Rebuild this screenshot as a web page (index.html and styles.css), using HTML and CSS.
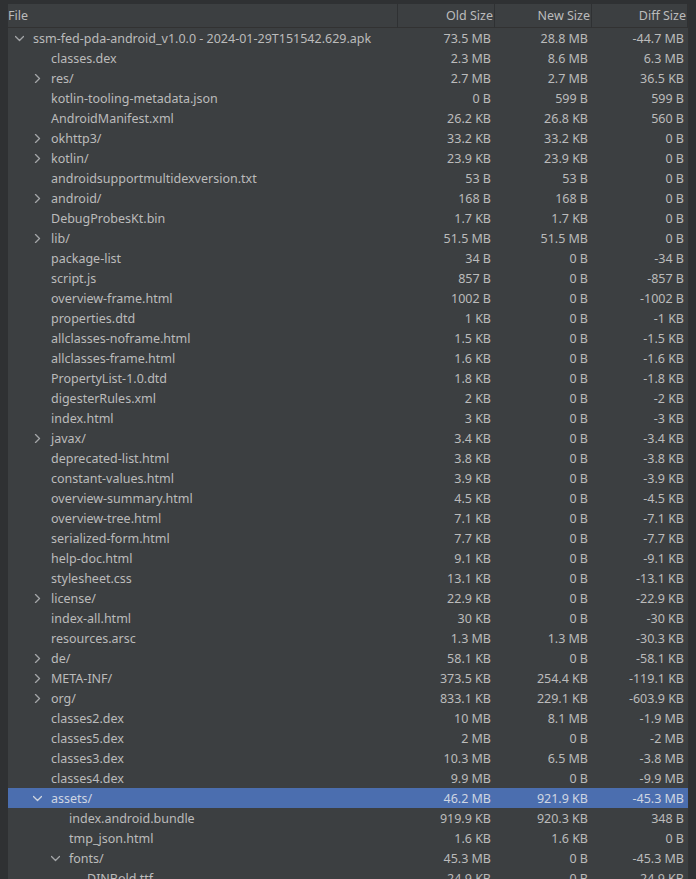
FILE: index.html
```html
<!DOCTYPE html>
<html>
<head>
<meta charset="utf-8">
<link rel="stylesheet" href="styles.css">
</head>
<body>
<div class="panel">
  <div class="head">
    <div class="hc hfile">File</div>
    <div class="hc">Old Size</div>
    <div class="hc">New Size</div>
    <div class="hc">Diff Size</div>
  </div>
  <div class="rows">
    <div class="row"><div class="name l0"><span class="tg"><svg viewBox="0 0 9 9"><polyline points="0.5,2.5 4.5,6.5 8.5,2.5"/></svg></span>ssm-fed-pda-android_v1.0.0 - 2024-01-29T151542.629.apk</div><div class="n">73.5 MB</div><div class="n">28.8 MB</div><div class="n">-44.7 MB</div></div>
    <div class="row"><div class="name l1"><span class="tg"></span>classes.dex</div><div class="n">2.3 MB</div><div class="n">8.6 MB</div><div class="n">6.3 MB</div></div>
    <div class="row"><div class="name l1"><span class="tg"><svg viewBox="0 0 9 9"><polyline points="2.5,0.5 6.5,4.5 2.5,8.5"/></svg></span>res/</div><div class="n">2.7 MB</div><div class="n">2.7 MB</div><div class="n">36.5 KB</div></div>
    <div class="row"><div class="name l1"><span class="tg"></span>kotlin-tooling-metadata.json</div><div class="n">0 B</div><div class="n">599 B</div><div class="n">599 B</div></div>
    <div class="row"><div class="name l1"><span class="tg"></span>AndroidManifest.xml</div><div class="n">26.2 KB</div><div class="n">26.8 KB</div><div class="n">560 B</div></div>
    <div class="row"><div class="name l1"><span class="tg"><svg viewBox="0 0 9 9"><polyline points="2.5,0.5 6.5,4.5 2.5,8.5"/></svg></span>okhttp3/</div><div class="n">33.2 KB</div><div class="n">33.2 KB</div><div class="n">0 B</div></div>
    <div class="row"><div class="name l1"><span class="tg"><svg viewBox="0 0 9 9"><polyline points="2.5,0.5 6.5,4.5 2.5,8.5"/></svg></span>kotlin/</div><div class="n">23.9 KB</div><div class="n">23.9 KB</div><div class="n">0 B</div></div>
    <div class="row"><div class="name l1"><span class="tg"></span>androidsupportmultidexversion.txt</div><div class="n">53 B</div><div class="n">53 B</div><div class="n">0 B</div></div>
    <div class="row"><div class="name l1"><span class="tg"><svg viewBox="0 0 9 9"><polyline points="2.5,0.5 6.5,4.5 2.5,8.5"/></svg></span>android/</div><div class="n">168 B</div><div class="n">168 B</div><div class="n">0 B</div></div>
    <div class="row"><div class="name l1"><span class="tg"></span>DebugProbesKt.bin</div><div class="n">1.7 KB</div><div class="n">1.7 KB</div><div class="n">0 B</div></div>
    <div class="row"><div class="name l1"><span class="tg"><svg viewBox="0 0 9 9"><polyline points="2.5,0.5 6.5,4.5 2.5,8.5"/></svg></span>lib/</div><div class="n">51.5 MB</div><div class="n">51.5 MB</div><div class="n">0 B</div></div>
    <div class="row"><div class="name l1"><span class="tg"></span>package-list</div><div class="n">34 B</div><div class="n">0 B</div><div class="n">-34 B</div></div>
    <div class="row"><div class="name l1"><span class="tg"></span>script.js</div><div class="n">857 B</div><div class="n">0 B</div><div class="n">-857 B</div></div>
    <div class="row"><div class="name l1"><span class="tg"></span>overview-frame.html</div><div class="n">1002 B</div><div class="n">0 B</div><div class="n">-1002 B</div></div>
    <div class="row"><div class="name l1"><span class="tg"></span>properties.dtd</div><div class="n">1 KB</div><div class="n">0 B</div><div class="n">-1 KB</div></div>
    <div class="row"><div class="name l1"><span class="tg"></span>allclasses-noframe.html</div><div class="n">1.5 KB</div><div class="n">0 B</div><div class="n">-1.5 KB</div></div>
    <div class="row"><div class="name l1"><span class="tg"></span>allclasses-frame.html</div><div class="n">1.6 KB</div><div class="n">0 B</div><div class="n">-1.6 KB</div></div>
    <div class="row"><div class="name l1"><span class="tg"></span>PropertyList-1.0.dtd</div><div class="n">1.8 KB</div><div class="n">0 B</div><div class="n">-1.8 KB</div></div>
    <div class="row"><div class="name l1"><span class="tg"></span>digesterRules.xml</div><div class="n">2 KB</div><div class="n">0 B</div><div class="n">-2 KB</div></div>
    <div class="row"><div class="name l1"><span class="tg"></span>index.html</div><div class="n">3 KB</div><div class="n">0 B</div><div class="n">-3 KB</div></div>
    <div class="row"><div class="name l1"><span class="tg"><svg viewBox="0 0 9 9"><polyline points="2.5,0.5 6.5,4.5 2.5,8.5"/></svg></span>javax/</div><div class="n">3.4 KB</div><div class="n">0 B</div><div class="n">-3.4 KB</div></div>
    <div class="row"><div class="name l1"><span class="tg"></span>deprecated-list.html</div><div class="n">3.8 KB</div><div class="n">0 B</div><div class="n">-3.8 KB</div></div>
    <div class="row"><div class="name l1"><span class="tg"></span>constant-values.html</div><div class="n">3.9 KB</div><div class="n">0 B</div><div class="n">-3.9 KB</div></div>
    <div class="row"><div class="name l1"><span class="tg"></span>overview-summary.html</div><div class="n">4.5 KB</div><div class="n">0 B</div><div class="n">-4.5 KB</div></div>
    <div class="row"><div class="name l1"><span class="tg"></span>overview-tree.html</div><div class="n">7.1 KB</div><div class="n">0 B</div><div class="n">-7.1 KB</div></div>
    <div class="row"><div class="name l1"><span class="tg"></span>serialized-form.html</div><div class="n">7.7 KB</div><div class="n">0 B</div><div class="n">-7.7 KB</div></div>
    <div class="row"><div class="name l1"><span class="tg"></span>help-doc.html</div><div class="n">9.1 KB</div><div class="n">0 B</div><div class="n">-9.1 KB</div></div>
    <div class="row"><div class="name l1"><span class="tg"></span>stylesheet.css</div><div class="n">13.1 KB</div><div class="n">0 B</div><div class="n">-13.1 KB</div></div>
    <div class="row"><div class="name l1"><span class="tg"><svg viewBox="0 0 9 9"><polyline points="2.5,0.5 6.5,4.5 2.5,8.5"/></svg></span>license/</div><div class="n">22.9 KB</div><div class="n">0 B</div><div class="n">-22.9 KB</div></div>
    <div class="row"><div class="name l1"><span class="tg"></span>index-all.html</div><div class="n">30 KB</div><div class="n">0 B</div><div class="n">-30 KB</div></div>
    <div class="row"><div class="name l1"><span class="tg"></span>resources.arsc</div><div class="n">1.3 MB</div><div class="n">1.3 MB</div><div class="n">-30.3 KB</div></div>
    <div class="row"><div class="name l1"><span class="tg"><svg viewBox="0 0 9 9"><polyline points="2.5,0.5 6.5,4.5 2.5,8.5"/></svg></span>de/</div><div class="n">58.1 KB</div><div class="n">0 B</div><div class="n">-58.1 KB</div></div>
    <div class="row"><div class="name l1"><span class="tg"><svg viewBox="0 0 9 9"><polyline points="2.5,0.5 6.5,4.5 2.5,8.5"/></svg></span>META-INF/</div><div class="n">373.5 KB</div><div class="n">254.4 KB</div><div class="n">-119.1 KB</div></div>
    <div class="row"><div class="name l1"><span class="tg"><svg viewBox="0 0 9 9"><polyline points="2.5,0.5 6.5,4.5 2.5,8.5"/></svg></span>org/</div><div class="n">833.1 KB</div><div class="n">229.1 KB</div><div class="n">-603.9 KB</div></div>
    <div class="row"><div class="name l1"><span class="tg"></span>classes2.dex</div><div class="n">10 MB</div><div class="n">8.1 MB</div><div class="n">-1.9 MB</div></div>
    <div class="row"><div class="name l1"><span class="tg"></span>classes5.dex</div><div class="n">2 MB</div><div class="n">0 B</div><div class="n">-2 MB</div></div>
    <div class="row"><div class="name l1"><span class="tg"></span>classes3.dex</div><div class="n">10.3 MB</div><div class="n">6.5 MB</div><div class="n">-3.8 MB</div></div>
    <div class="row"><div class="name l1"><span class="tg"></span>classes4.dex</div><div class="n">9.9 MB</div><div class="n">0 B</div><div class="n">-9.9 MB</div></div>
    <div class="row sel"><div class="name l1"><span class="tg"><svg viewBox="0 0 9 9"><polyline points="0.5,2.5 4.5,6.5 8.5,2.5"/></svg></span>assets/</div><div class="n">46.2 MB</div><div class="n">921.9 KB</div><div class="n">-45.3 MB</div></div>
    <div class="row"><div class="name l2"><span class="tg"></span>index.android.bundle</div><div class="n">919.9 KB</div><div class="n">920.3 KB</div><div class="n">348 B</div></div>
    <div class="row"><div class="name l2"><span class="tg"></span>tmp_json.html</div><div class="n">1.6 KB</div><div class="n">1.6 KB</div><div class="n">0 B</div></div>
    <div class="row"><div class="name l2"><span class="tg"><svg viewBox="0 0 9 9"><polyline points="0.5,2.5 4.5,6.5 8.5,2.5"/></svg></span>fonts/</div><div class="n">45.3 MB</div><div class="n">0 B</div><div class="n">-45.3 MB</div></div>
    <div class="row"><div class="name l3"><span class="tg"></span>DINBold.ttf</div><div class="n">24.9 KB</div><div class="n">0 B</div><div class="n">-24.9 KB</div></div>
  </div>
</div>
</body>
</html>
```

FILE: styles.css
```css
html, body {
  margin: 0;
  padding: 0;
  height: 100%;
  overflow: hidden;
}
body {
  background: #2f3133;
  padding: 4px 8px 0 8px;
  box-sizing: border-box;
  font-family: "Noto Sans", "Open Sans", sans-serif;
  font-size: 12.5px;
  color: #bbbbbb;
}
.panel {
  width: 680px;
  height: 100%;
  background: #3c3f41;
  border-right: 1px solid #323232;
}
.head {
  display: grid;
  grid-template-columns: 390px 97px 97px 96px;
  height: 24px;
  border-bottom: 1px solid #323232;
  box-sizing: border-box;
  background: #3c3f41;
}
.hc {
  line-height: 24px;
  text-align: right;
  padding-right: 1px;
  border-right: 1px solid #2f3133;
  white-space: nowrap;
}
.hc.hfile {
  text-align: left;
  padding-left: 0;
}
.rows {
  display: flex;
  flex-direction: column;
}
.row {
  display: grid;
  grid-template-columns: 390px 97px 97px 96px;
  height: 20px;
  box-sizing: border-box;
  padding-top: 2px;
  line-height: 18px;
  white-space: nowrap;
}
.row.sel {
  background: #4b6eaf;
  color: #cfd6e3;
}
.name {
  display: flex;
  align-items: center;
  overflow: hidden;
}
.l0 { padding-left: 7px; }
.l1 { padding-left: 25px; }
.l2 { padding-left: 43px; }
.l3 { padding-left: 61px; }
.tg {
  width: 18px;
  flex: none;
  display: flex;
  align-items: center;
  height: 16px;
  margin-top: -1px;
}
.tg svg {
  width: 9px;
  height: 9px;
  fill: none;
  stroke: #a4a6a8;
  stroke-width: 1.3;
  stroke-linecap: round;
  stroke-linejoin: round;
}
.sel .tg svg {
  stroke: #d0d6e0;
}
.n {
  text-align: right;
  padding-right: 4px;
}
```
